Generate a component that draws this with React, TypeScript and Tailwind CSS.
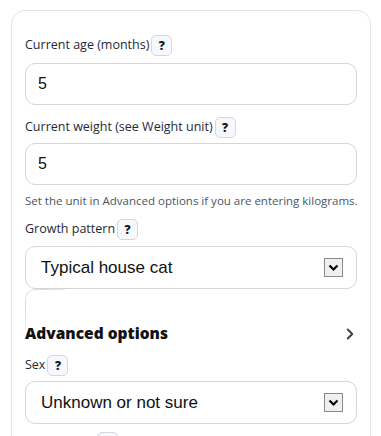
import { type JSX } from "react";
import { ChevronRight } from "lucide-react";

const ui = { fontFamily: '"Open Sans", "Noto Sans", sans-serif' };
const field = { fontFamily: '"Liberation Sans", Arial, sans-serif' };

function Help(): JSX.Element {
  return (
    <span className="ml-[2px] flex h-[21px] w-[21px] items-center justify-center rounded-[5px] border border-[#cfd8e3] bg-[#f6f8fb] text-[12px] font-extrabold leading-none text-[#111827]">
      ?
    </span>
  );
}

function Label({ text }: { text: string }): JSX.Element {
  return (
    <div className="flex h-[21px] items-center text-[12.5px] text-[#1f2937]">
      <span>{text}</span>
      <Help />
    </div>
  );
}

function TextBox({ value }: { value: string }): JSX.Element {
  return (
    <div
      style={field}
      className="flex h-[42px] items-center rounded-[10px] border border-[#d4d6db] bg-white pl-[12px] text-[16px] text-[#111]"
    >
      {value}
    </div>
  );
}

function SelectBox({ value }: { value: string }): JSX.Element {
  return (
    <div
      style={field}
      className="flex h-[43px] items-center justify-between rounded-[10px] border border-[#d4d6db] bg-white pl-[15px] pr-[13px] text-[17px] text-[#111]"
    >
      <span>{value}</span>
      <span className="flex h-[19px] w-[19px] items-center justify-center border border-[#8a8a8a] bg-[#efefef]">
        <svg width="11" height="8" viewBox="0 0 11 8">
          <polyline
            points="1.5,1.5 5.5,5.5 9.5,1.5"
            fill="none"
            stroke="#000"
            strokeWidth="2.2"
          />
        </svg>
      </span>
    </div>
  );
}

export default function App(): JSX.Element {
  return (
    <div style={ui} className="h-[436px] overflow-hidden bg-white pl-[11px] pt-[10px]">
      <div className="h-[460px] w-[360px] rounded-[14px] border border-[#e3e5e8] px-[13px] pt-[24px]">
        <Label text="Current age (months)" />
        <div className="mt-[7px]">
          <TextBox value="5" />
        </div>

        <div className="mt-[12px]">
          <Label text="Current weight (see Weight unit)" />
        </div>
        <div className="mt-[5px]">
          <TextBox value="5" />
        </div>
        <p className="mt-[7px] whitespace-nowrap text-[11.5px] leading-[18px] text-[#4b5563]">
          Set the unit in Advanced options if you are entering kilograms.
        </p>

        <div className="mt-[9px]">
          <Label text="Growth pattern" />
        </div>
        <div className="mt-[6px]">
          <SelectBox value="Typical house cat" />
        </div>

        <div>
          <div className="h-[40px] w-[40px] rounded-tl-[10px] border-l border-t border-[#dcdee2] [mask-image:linear-gradient(to_bottom_right,black_30%,transparent_90%)]" />
          <div className="flex h-[10px] items-center justify-between">
            <span className="text-[15.5px] font-black text-[#111]">Advanced options</span>
            <ChevronRight size={18} strokeWidth={2.5} className="mr-[-2px] text-[#374151]" />
          </div>
        </div>

        <div className="mt-[16px]">
          <Label text="Sex" />
        </div>
        <div className="mt-[5px]">
          <SelectBox value="Unknown or not sure" />
        </div>
        <div className="ml-[70px] mt-[8px]">
          <Help />
        </div>
      </div>
    </div>
  );
}
